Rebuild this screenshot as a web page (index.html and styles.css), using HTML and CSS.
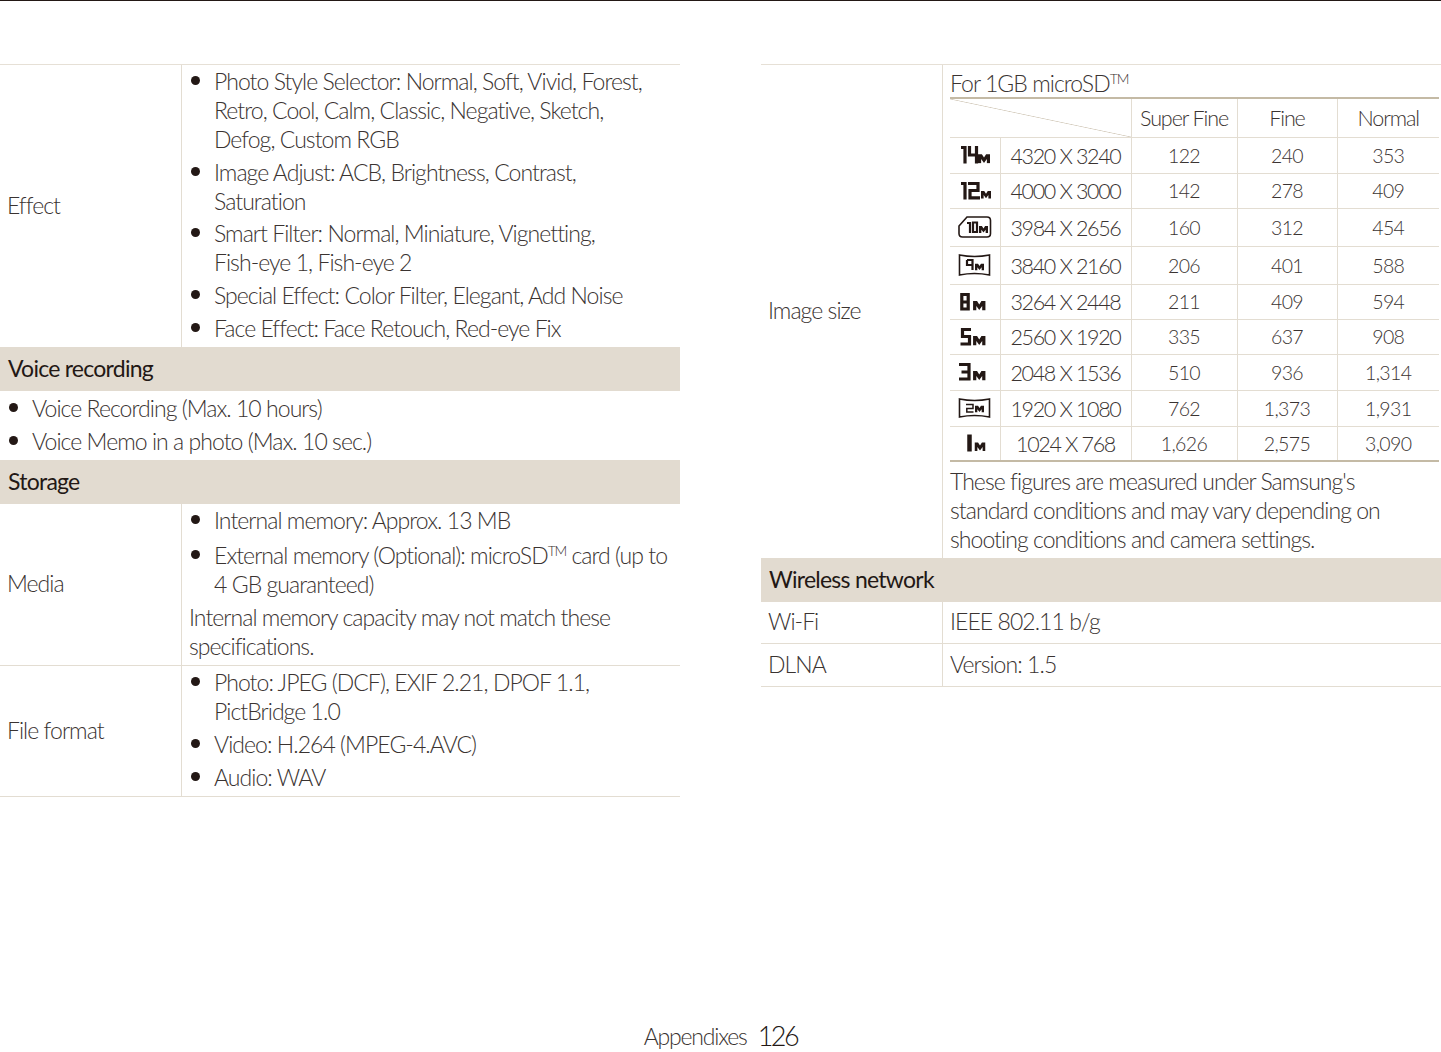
FILE: index.html
```html
<!DOCTYPE html>
<html lang="en">
<head>
<meta charset="utf-8">
<title>Appendixes 126</title>
<link rel="stylesheet" href="styles.css">
</head>
<body>
<svg class="defs" aria-hidden="true"><defs>
<symbol id="mm" viewBox="0 0 13 10"><path d="M0 0H4.2L6.5 3.6 8.8 0H13V10H9.6V5.2L6.5 9.5 3.4 5.2V10H0Z" fill="#231815"/></symbol>
</defs></svg>
<div class="page">
<main class="spread">
<section class="col">
  <div class="row">
    <div class="label">Effect</div>
    <div class="value">
      <ul class="list">
        <li>Photo Style Selector: Normal, Soft, Vivid, Forest,<br>Retro, Cool, Calm, Classic, Negative, Sketch,<br>Defog, Custom RGB</li>
        <li class="li-tight">Image Adjust: ACB, Brightness, Contrast,<br>Saturation</li>
        <li>Smart Filter: Normal, Miniature, Vignetting,<br>Fish-eye 1, Fish-eye 2</li>
        <li>Special Effect: Color Filter, Elegant, Add Noise</li>
        <li>Face Effect: Face Retouch, Red-eye Fix</li>
      </ul>
    </div>
  </div>
  <h2 class="band">Voice recording</h2>
  <div class="plain">
    <ul class="list list-wide">
      <li>Voice Recording (Max. 10 hours)</li>
      <li>Voice Memo in a photo (Max. 10 sec.)</li>
    </ul>
  </div>
  <h2 class="band">Storage</h2>
  <div class="row row-line">
    <div class="label">Media</div>
    <div class="value">
      <ul class="list">
        <li>Internal memory: Approx. 13 MB</li>
        <li class="li-sup">External memory (Optional): microSD<sup>TM</sup> card (up to<br>4 GB guaranteed)</li>
      </ul>
      <p class="note">Internal memory capacity may not match these<br>specifications.</p>
    </div>
  </div>
  <div class="row row-line">
    <div class="label">File format</div>
    <div class="value">
      <ul class="list">
        <li>Photo: JPEG (DCF), EXIF 2.21, DPOF 1.1,<br>PictBridge 1.0</li>
        <li>Video: H.264 (MPEG-4.AVC)</li>
        <li>Audio: WAV</li>
      </ul>
    </div>
  </div>
</section>

<section class="col">
  <div class="row">
    <div class="label">Image size</div>
    <div class="value value-table">
      <div class="caption">For 1GB microSD<sup>TM</sup></div>
      <table class="sizes">
        <colgroup><col class="c-ic"><col class="c-dim"><col class="c-sf"><col class="c-f"><col class="c-n"></colgroup>
        <tr class="h39 head"><th colspan="2" class="diag"></th><th>Super Fine</th><th>Fine</th><th>Normal</th></tr>
        <tr class="h36"><td class="ic"><svg viewBox="0 0 36 24" class="icon"><path d="M4 4.5H8M8 3V20.5M12.5 3V12H19M19.5 3V20.5" class="st"/><use href="#mm" x="21" y="11" width="12" height="9.5"/></svg></td><td class="dim">4320 X 3240</td><td>122</td><td>240</td><td>353</td></tr>
        <tr class="h35"><td class="ic"><svg viewBox="0 0 36 24" class="icon"><path d="M4 4.5H8M8 3V20.5M11 4.5H21V11.5H13V18.8H23" class="st"/><use href="#mm" x="24" y="11" width="10" height="9.5"/></svg></td><td class="dim">4000 X 3000</td><td>142</td><td>278</td><td>409</td></tr>
        <tr class="h38"><td class="ic"><svg viewBox="0 0 36 24" class="icon"><path d="M2 11L10 2H30Q33.500 2 33.500 5.500V18.500Q33.500 22 30 22H5.500Q2 22 2 18.500Z" class="fr"/><path d="M10 8H13V18" class="st2"/><path d="M16 7.500H20V17H16Z" class="st2"/><use href="#mm" x="22" y="11" width="9" height="7"/></svg></td><td class="dim">3984 X 2656</td><td>160</td><td>312</td><td>454</td></tr>
        <tr class="h38"><td class="ic"><svg viewBox="0 0 36 24" class="icon"><path d="M2.500 2Q17.500 5 32.500 2V22Q17.500 19 2.500 22Z" class="fr"/><path d="M10 7H15.500V17M15.500 12H10V7" class="st2"/><use href="#mm" x="18" y="10.500" width="9" height="7"/></svg></td><td class="dim">3840 X 2160</td><td>206</td><td>401</td><td>588</td></tr>
        <tr class="h35"><td class="ic"><svg viewBox="0 0 36 24" class="icon"><path d="M4.800 4.500H11.200V19H4.800ZM4.800 12H11.200" class="st"/><use href="#mm" x="15" y="11" width="14.500" height="9.500"/></svg></td><td class="dim">3264 X 2448</td><td>211</td><td>409</td><td>594</td></tr>
        <tr class="h35"><td class="ic"><svg viewBox="0 0 36 24" class="icon"><path d="M14 4.500H5.500V11.500H12.500V19H3.500" class="st"/><use href="#mm" x="15" y="11" width="14.500" height="9.500"/></svg></td><td class="dim">2560 X 1920</td><td>335</td><td>637</td><td>908</td></tr>
        <tr class="h36"><td class="ic"><svg viewBox="0 0 36 24" class="icon"><path d="M2 4.500H12V19H2M4.500 12H12" class="st"/><use href="#mm" x="15" y="11" width="14.500" height="9.500"/></svg></td><td class="dim">2048 X 1536</td><td>510</td><td>936</td><td>1,314</td></tr>
        <tr class="h36"><td class="ic"><svg viewBox="0 0 36 24" class="icon"><path d="M2.500 3Q17.500 6 32.500 3V21Q17.500 18 2.500 21Z" class="fr"/><path d="M9 8.500H16V12.500H9.800V16H16.500" class="st1"/><use href="#mm" x="18" y="9.500" width="9" height="7"/></svg></td><td class="dim">1920 X 1080</td><td>762</td><td>1,373</td><td>1,931</td></tr>
        <tr class="h35 last"><td class="ic"><svg viewBox="0 0 36 24" class="icon"><path d="M12.500 3.500V20.500" class="st4"/><use href="#mm" x="17.500" y="11" width="11" height="9.500"/></svg></td><td class="dim">1024 X 768</td><td>1,626</td><td>2,575</td><td>3,090</td></tr>
      </table>
      <p class="note note-tight">These figures are measured under Samsung's<br>standard conditions and may vary depending on<br>shooting conditions and camera settings.</p>
    </div>
  </div>
  <h2 class="band">Wireless network</h2>
  <div class="row row-line row-small">
    <div class="label">Wi-Fi</div>
    <div class="value">IEEE 802.11 b/g</div>
  </div>
  <div class="row row-line row-small">
    <div class="label">DLNA</div>
    <div class="value">Version: 1.5</div>
  </div>
</section>
</main>
<footer class="foot"><span>Appendixes</span><b>126</b></footer>
</div>
</body>
</html>
```
FILE: styles.css
```css
* { box-sizing: border-box; }
html, body { margin: 0; padding: 0; background: #fff; }
body {
  font-family: Lato, "Liberation Sans", sans-serif;
  font-weight: 300;
  font-size: 23px;
  line-height: 29px;
  letter-spacing: -0.95px;
  color: #3a3331;
}
.defs { position: absolute; width: 0; height: 0; }
.page {
  height: 1052px;
  display: flex;
  flex-direction: column;
  border-top: 1px solid #231815;
  overflow: hidden;
}
.spread {
  flex: 1;
  display: grid;
  grid-template-columns: 680px 680px;
  column-gap: 81px;
  align-items: start;
  padding-top: 63px;
}
.col { border-top: 1px solid #e6e0d6; }
.row {
  display: grid;
  grid-template-columns: 181px 1fr;
}
.row-line { border-bottom: 1px solid #e3ddd2; }
.row-small { height: 42px; }
.row-small + .row-small { height: 43px; }
.label {
  display: flex;
  align-items: center;
  padding-left: 7px;
  padding-bottom: 2px;
}
.value {
  border-left: 1px solid #e3ddd2;
  padding: 2px 7px 4px;
  white-space: nowrap;
}
.row-small .value { display: flex; align-items: center; }
.value-table { padding: 4px 0 4px 7px; }
.list { margin: 0; padding: 0; list-style: none; }
.list li {
  position: relative;
  padding-left: 25px;
  margin-bottom: 4px;
}
.list li.li-tight { margin-bottom: 3px; }
.list li:last-child { margin-bottom: 0; }
.list li::before {
  content: "";
  position: absolute;
  left: 2px;
  top: 9px;
  width: 9px;
  height: 9px;
  border-radius: 50%;
  background: #231815;
}
.list-wide li { padding-left: 32px; }
.list-wide li::before { left: 9px; }
.plain { padding: 3px 0 4px; }
.li-sup { padding-top: 2px; }
.list li.li-sup::before { top: 11px; }
.note { margin: 4px 0 0; }
.note-tight { margin: 5px 0 0; }
sup { font-size: 14px; line-height: 0; vertical-align: 8px; letter-spacing: -1.2px; }
.band {
  margin: 0;
  height: 44px;
  display: flex;
  align-items: center;
  padding: 0 0 1px 8px;
  background: #e2dbd0;
  font-size: 23px;
  font-weight: 400;
  line-height: 29px;
  letter-spacing: -0.75px;
  color: #231815;
}
.caption { height: 28px; }
.sizes {
  table-layout: fixed;
  border-collapse: collapse;
  width: 489px;
  border-top: 2px solid #c4baa5;
  border-bottom: 2px solid #c4baa5;
  font-size: 19.5px;
  line-height: 24px;
  letter-spacing: -0.6px;
  text-align: center;
}
.c-ic { width: 50px; }
.c-dim { width: 131px; }
.c-sf { width: 106px; }
.c-f { width: 100px; }
.c-n { width: 102px; }
.sizes th, .sizes td {
  padding: 1px 0 0;
  font-weight: 300;
  border: 1px solid #e3ddd2;
}
.sizes tr:first-child th { border-top: 0; }
.sizes th:first-child, .sizes td:first-child { border-left: 0; }
.sizes th:last-child, .sizes td:last-child { border-right: 0; }
.sizes .last td { border-bottom: 0; }
.sizes td.ic { padding: 0; }
.h35 { height: 35px; }
.h36 { height: 36px; }
.h38 { height: 38px; }
.h39 { height: 39px; }
.head th { font-size: 21.5px; letter-spacing: -1.1px; }
.dim { font-size: 21.5px; letter-spacing: -1.35px; }
.diag {
  background: linear-gradient(to top right, transparent calc(50% - 0.7px), #d5cdbf 50%, transparent calc(50% + 0.7px));
}
.ic { line-height: 0; }
.icon { width: 36px; height: 24px; display: block; margin: 0 auto; }
.st, .st1, .st2, .st4, .fr { fill: none; stroke: #231815; }
.st { stroke-width: 3.2; }
.st1 { stroke-width: 1.5; }
.st2 { stroke-width: 2.2; }
.st4 { stroke-width: 4.5; }
.fr { stroke-width: 1.6; }
.foot {
  height: 42px;
  padding-bottom: 3px;
  padding-top: 4px;
  display: flex;
  justify-content: center;
  align-items: flex-end;
  gap: 11px;
  line-height: 26px;
  letter-spacing: -1.2px;
  color: #3a3331;
}
.foot b {
  font-weight: 300;
  font-size: 27px;
  letter-spacing: -2.5px;
  color: #231815;
}
```
